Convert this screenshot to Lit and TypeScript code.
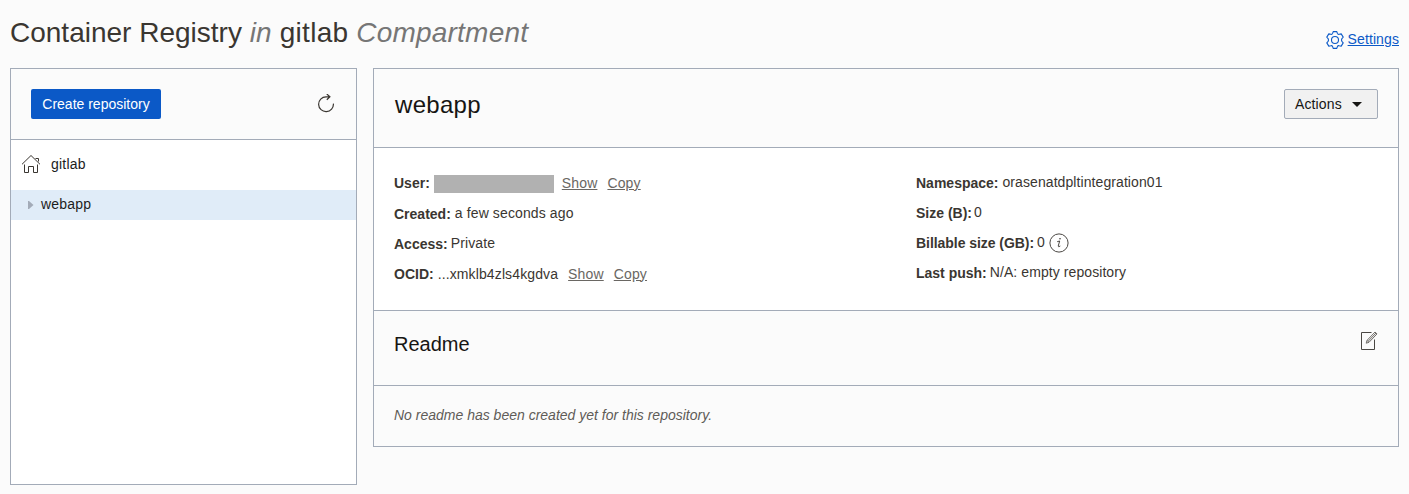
import { LitElement, html, css } from "lit";
import { customElement } from "lit/decorators.js";

@customElement("app-root")
export class AppRoot extends LitElement {
  static styles = css`
    :host {
      display: block;
      box-sizing: border-box;
      height: 494px;
      padding: 0 10px;
      overflow: hidden;
      background: #fbfbfb;
      color: #3a3631;
      font: 14px/20px "Liberation Sans", Arial, sans-serif;
    }
    * { box-sizing: border-box; }
    svg { display: block; flex: none; }
    h1, h2, h3, p { margin: 0; font-weight: 400; }
    .top { display: flex; justify-content: space-between; height: 68px; }
    h1 { font-size: 28px; line-height: 36px; padding-top: 15px; white-space: pre; }
    h1 em { color: #767676; letter-spacing: 0.22px; }
    h1 .name { letter-spacing: 0.3px; }
    .settings { display: flex; align-items: center; gap: 4px; height: 20px; margin-top: 29px; color: #0b59c7; }
    .settings svg { margin-top: 2px; }
    .settings span { text-decoration: underline; letter-spacing: 0.1px; }
    .columns { display: flex; align-items: flex-start; gap: 16px; }
    .panel { border: 1px solid #a3abb8; }
    .side { width: 347px; height: 417px; background: #fff; }
    .bar { display: flex; justify-content: space-between; padding: 20px 20px 0; background: #fbfbfb; border-bottom: 1px solid #a3abb8; }
    .side .bar { height: 71px; }
    .create { width: 130px; height: 30px; border: 0; border-radius: 2px; padding: 0; background: #0b59c7; color: #fff; font: inherit; }
    .refresh { margin-top: 5px; }
    .item { display: flex; align-items: center; color: #1c1c1c; letter-spacing: 0.2px; }
    .home { height: 50px; padding: 0 0 2px 10px; gap: 10px; }
    .home svg { margin-bottom: 1px; }
    .repo { height: 30px; padding: 0 0 2px 17px; gap: 7px; background: #e0ecf8; }
    .repo svg { margin-top: 2px; }
    .main { flex: 1; }
    .title { height: 79px; }
    .title h2 { padding: 1px 0 0 1px; font-size: 24px; line-height: 30px; letter-spacing: 0.3px; color: #161513; }
    .actions { display: flex; align-items: center; gap: 10px; width: 94px; height: 30px; padding: 0 0 0 10px; border: 1px solid #a3abb8; border-radius: 2px; background: #f1f1f1; color: #161513; font: inherit; letter-spacing: 0.13px; }
    .details { display: grid; grid-template-columns: 522px 1fr; height: 162px; padding: 20px 20px 0; background: #fff; }
    .row { display: flex; align-items: center; height: 30px; gap: 4px; }
    .left .row { letter-spacing: 0.12px; }
    .left .row b { letter-spacing: 0; padding-top: 1px; }
    .left .row:first-child b { padding-top: 0; }
    .left .row:nth-child(3) span { padding-bottom: 1px; margin-left: -1px; }
    .left .row:nth-child(4) span { padding-top: 1px; }
    .right .row > span { padding-bottom: 2px; letter-spacing: 0.08px; }
    .right .row:nth-child(n + 2) { gap: 3px; }
    .right .row:nth-child(2) { gap: 2px; }
    .right .wide b { letter-spacing: -0.05px; }
    .right .row.wide { gap: 4px; }
    .right .row.wide b { margin-right: -1px; }
    .left .row .mask { width: 120px; height: 18px; margin-top: 2px; background: #b1b1b1; }
    .link { color: #6a6763; text-decoration: underline; letter-spacing: 0.15px; }
    .first { margin-left: 4px; }
    .ocid + .first { margin-left: 6px; }
    .link + .link { margin-left: 6px; }
    .readme { height: 76px; border-top: 1px solid #a3abb8; }
    .readme h3 { font-size: 20px; line-height: 26px; color: #161513; }
    .empty { height: 60px; padding: 19px 20px; font-style: italic; color: #5f5c58; }
  `;

  render() {
    return html`
      <header class="top">
        <h1>Container Registry <em>in</em> <span class="name">gitlab</span> <em>Compartment</em></h1>
        <div class="settings">
          <svg width="18" height="18" viewBox="0 0 18 18" fill="none" stroke="currentColor" stroke-width="1.1" stroke-linejoin="round">
            <path d="M7.2 .6H10.8L11.4 2.4Q11.9 3.7 13.2 3.3L15.2 2.9L17.2 6.1L15.9 7.6Q15 9 15.9 10.4L17.2 11.9L15.2 15.1L13.2 14.7Q11.9 14.3 11.4 15.6L10.8 17.4H7.2L6.6 15.6Q6.1 14.3 4.8 14.7L2.8 15.1L.8 11.9L2.1 10.4Q3 9 2.1 7.6L.8 6.1L2.8 2.9L4.8 3.3Q6.1 3.7 6.6 2.4Z"/>
            <circle cx="9" cy="9" r="3.5"/>
          </svg>
          <span>Settings</span>
        </div>
      </header>
      <div class="columns">
        <aside class="panel side">
          <div class="bar">
            <button class="create">Create repository</button>
            <svg class="refresh" width="20" height="20" viewBox="0 0 20 20" fill="none" stroke="#3a3631" stroke-width="1.2">
              <path d="M17.4 9.6A7.4 7.4 0 1 1 10 2.8H13.8M10.8 0L13.9 2.8L10.8 5.7"/>
            </svg>
          </div>
          <div class="item home">
            <svg width="20" height="20" viewBox="0 0 20 20" fill="none" stroke="#3a3631" stroke-width="1">
              <path d="M1 10.3L10 1.5L19 10.3M3.5 10.5V18.5H7.5V12.5H12.5V18.5H16.5V10.5M14.5 4.5H17.5V7.5"/>
            </svg>
            <span>gitlab</span>
          </div>
          <div class="item repo">
            <svg width="6" height="8" viewBox="0 0 6 8"><path d="M0 0H1L5.5 4L1 8H0Z" fill="#a3abb8"/></svg>
            <span>webapp</span>
          </div>
        </aside>
        <main class="panel main">
          <div class="bar title">
            <h2>webapp</h2>
            <button class="actions">Actions
              <svg width="10" height="5" viewBox="0 0 10 5"><path d="M0 0H10L5 5Z" fill="#161513"/></svg>
            </button>
          </div>
          <section class="details">
            <div class="left">
              <div class="row"><b>User:</b><span class="mask"></span><span class="link first">Show</span><span class="link">Copy</span></div>
              <div class="row"><b>Created:</b><span>a few seconds ago</span></div>
              <div class="row"><b>Access:</b><span>Private</span></div>
              <div class="row"><b>OCID:</b><span class="ocid">...xmklb4zls4kgdva</span><span class="link first">Show</span><span class="link">Copy</span></div>
            </div>
            <div class="right">
              <div class="row"><b>Namespace:</b><span>orasenatdpltintegration01</span></div>
              <div class="row"><b>Size (B):</b><span>0</span></div>
              <div class="row wide"><b>Billable size (GB):</b><span>0</span>
                <svg width="20" height="20" viewBox="0 0 20 20" fill="none" stroke="#4a4743">
                  <circle cx="10" cy="10" r="9.1"/>
                  <path d="M8.2 8.7L10.7 8L9.2 13.1Q9.1 14.4 11.3 13"/>
                  <circle cx="11" cy="5.7" r=".8" fill="#3a3631" stroke="none"/>
                </svg>
              </div>
              <div class="row"><b>Last push:</b><span>N/A: empty repository</span></div>
            </div>
          </section>
          <div class="bar readme">
            <h3>Readme</h3>
            <svg width="18" height="20" viewBox="0 0 18 20" fill="none" stroke="#4a4743">
              <path d="M11.5 1.5H1.5V18.5H14.5V8.5"/>
              <path d="M6.2 12.2L7 9.4L15 1L17 2.9L9 11.3ZM7 9.4L9 11.3M8.3 10.1L16 2" stroke="#706d69"/>
            </svg>
          </div>
          <p class="empty">No readme has been created yet for this repository.</p>
        </main>
      </div>
    `;
  }
}
